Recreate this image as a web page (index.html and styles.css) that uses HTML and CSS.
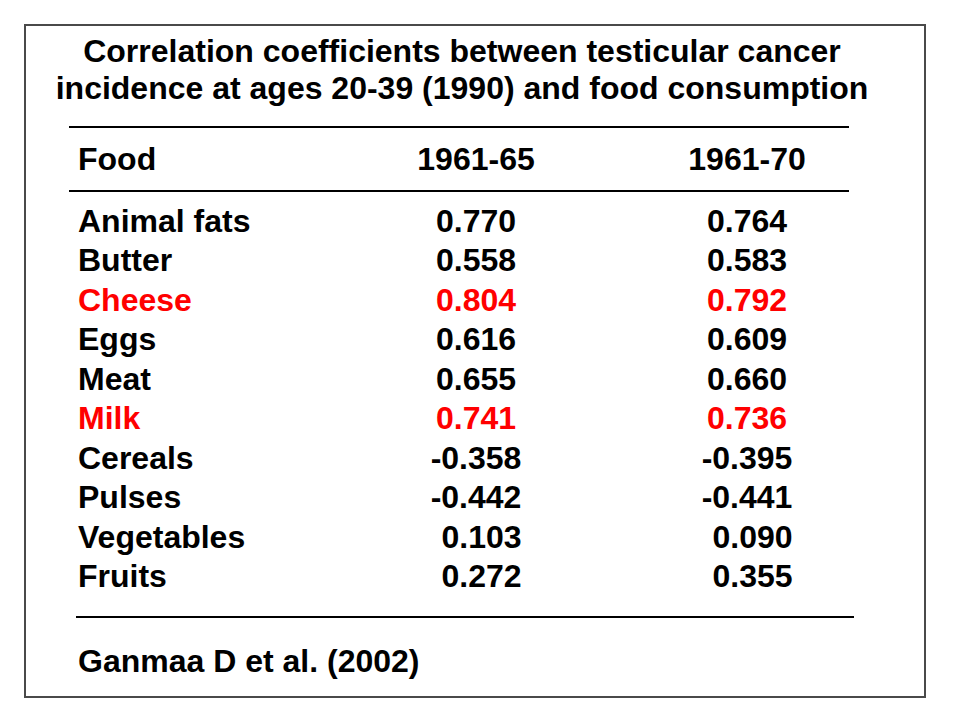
FILE: index.html
```html
<!DOCTYPE html>
<html lang="en">
<head>
<meta charset="utf-8">
<title>Correlation coefficients</title>
<link rel="stylesheet" href="styles.css">
</head>
<body>
<div class="slide">
  <h1 class="title"><span>Correlation coefficients between testicular cancer</span><span>incidence at ages 20-39 (1990) and food consumption</span></h1>
  <div class="rule top"></div>
  <div class="row head">
    <div class="food">Food</div>
    <div class="v1">1961-65</div>
    <div class="v2">1961-70</div>
  </div>
  <div class="rule"></div>
  <div class="body">
    <div class="row"><div class="food">Animal fats</div><div class="v1">0.770</div><div class="v2">0.764</div></div>
    <div class="row"><div class="food">Butter</div><div class="v1">0.558</div><div class="v2">0.583</div></div>
    <div class="row red"><div class="food">Cheese</div><div class="v1">0.804</div><div class="v2">0.792</div></div>
    <div class="row"><div class="food">Eggs</div><div class="v1">0.616</div><div class="v2">0.609</div></div>
    <div class="row"><div class="food">Meat</div><div class="v1">0.655</div><div class="v2">0.660</div></div>
    <div class="row red"><div class="food">Milk</div><div class="v1">0.741</div><div class="v2">0.736</div></div>
    <div class="row"><div class="food">Cereals</div><div class="v1">-0.358</div><div class="v2">-0.395</div></div>
    <div class="row"><div class="food">Pulses</div><div class="v1">-0.442</div><div class="v2">-0.441</div></div>
    <div class="row"><div class="food">Vegetables</div><div class="v1 shift">0.103</div><div class="v2 shift">0.090</div></div>
    <div class="row"><div class="food">Fruits</div><div class="v1 shift">0.272</div><div class="v2 shift">0.355</div></div>
  </div>
  <div class="rule bottom"></div>
  <div class="source">Ganmaa D et al. (2002)</div>
</div>
</body>
</html>
```
FILE: styles.css
```css
html, body {
  margin: 0;
  padding: 0;
  background: #ffffff;
}
body {
  width: 960px;
  height: 720px;
  overflow: hidden;
  font-family: "Liberation Sans", Arial, sans-serif;
  font-weight: bold;
  font-size: 32px;
  color: #000;
}
.slide {
  box-sizing: border-box;
  margin: 24px 0 0 24px;
  width: 902px;
  height: 674px;
  border: 2px solid #4a4a4a;
  padding: 7px 0 0 43px;
}
.title {
  margin: 0;
  width: 786px;
  display: flex;
  flex-direction: column;
  align-items: center;
  white-space: nowrap;
  font-size: 32px;
  font-weight: bold;
  line-height: 37px;
}
.rule {
  width: 780px;
  height: 2px;
  background: #000;
}
.rule.top {
  margin-top: 19px;
}
.rule.bottom {
  margin-top: 19px;
  margin-left: 7px;
  width: 778px;
}
.row {
  display: flex;
  line-height: 39.5px;
  padding-left: 9px;
}
.row.head {
  padding-top: 12px;
  padding-bottom: 10px;
}
.body {
  padding-top: 10px;
}
.food {
  width: 322px;
}
.v1, .v2 {
  width: 152px;
  text-align: center;
}
.v2 {
  margin-left: 119px;
}
.shift {
  padding-left: 11px;
  box-sizing: border-box;
}
.red {
  color: #ff0000;
}
.source {
  padding-top: 24px;
  padding-left: 9px;
  line-height: 39.5px;
}
```
